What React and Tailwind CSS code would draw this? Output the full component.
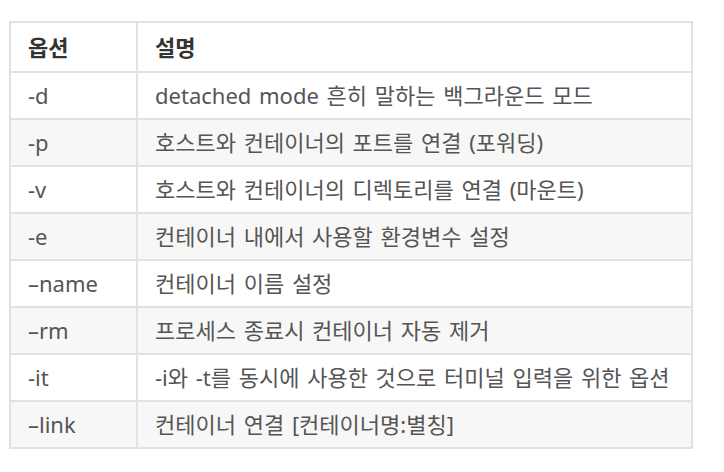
import React from "react";

const rows = [
  ["-d", "detached mode 흔히 말하는 백그라운드 모드"],
  ["-p", "호스트와 컨테이너의 포트를 연결 (포워딩)"],
  ["-v", "호스트와 컨테이너의 디렉토리를 연결 (마운트)"],
  ["-e", "컨테이너 내에서 사용할 환경변수 설정"],
  ["–name", "컨테이너 이름 설정"],
  ["–rm", "프로세스 종료시 컨테이너 자동 제거"],
  ["-it", "-i와 -t를 동시에 사용한 것으로 터미널 입력을 위한 옵션"],
  ["–link", "컨테이너 연결 [컨테이너명:별칭]"],
];

const App = () => {
  return (
    <div
      className="w-[724px] h-[472px] bg-white pt-[21px] pl-[9px]"
      style={{ fontFamily: '"Noto Sans", "Noto Sans CJK KR", sans-serif' }}
    >
      <table className="w-[684px] border-collapse border-2 border-[#e2e2e2] text-[22px] leading-[1.2] text-[#555] [word-spacing:2px]">
        <thead>
          <tr className="h-[50px]">
            <th className="w-[127px] border-2 border-[#e2e2e2] pl-[17px] text-left font-bold text-[#333]">
              옵션
            </th>
            <th className="border-2 border-[#e2e2e2] pl-[17px] text-left font-bold text-[#333]">
              설명
            </th>
          </tr>
        </thead>
        <tbody>
          {rows.map(([opt, desc], i) => (
            <tr
              key={opt}
              className={i % 2 === 1 ? "h-[47px] bg-[#f7f7f7]" : "h-[47px] bg-white"}
            >
              <td className="border-2 border-[#e2e2e2] pl-[17px]">{opt}</td>
              <td className="border-2 border-[#e2e2e2] pl-[17px] whitespace-nowrap">{desc}</td>
            </tr>
          ))}
        </tbody>
      </table>
    </div>
  );
};

export default App;
